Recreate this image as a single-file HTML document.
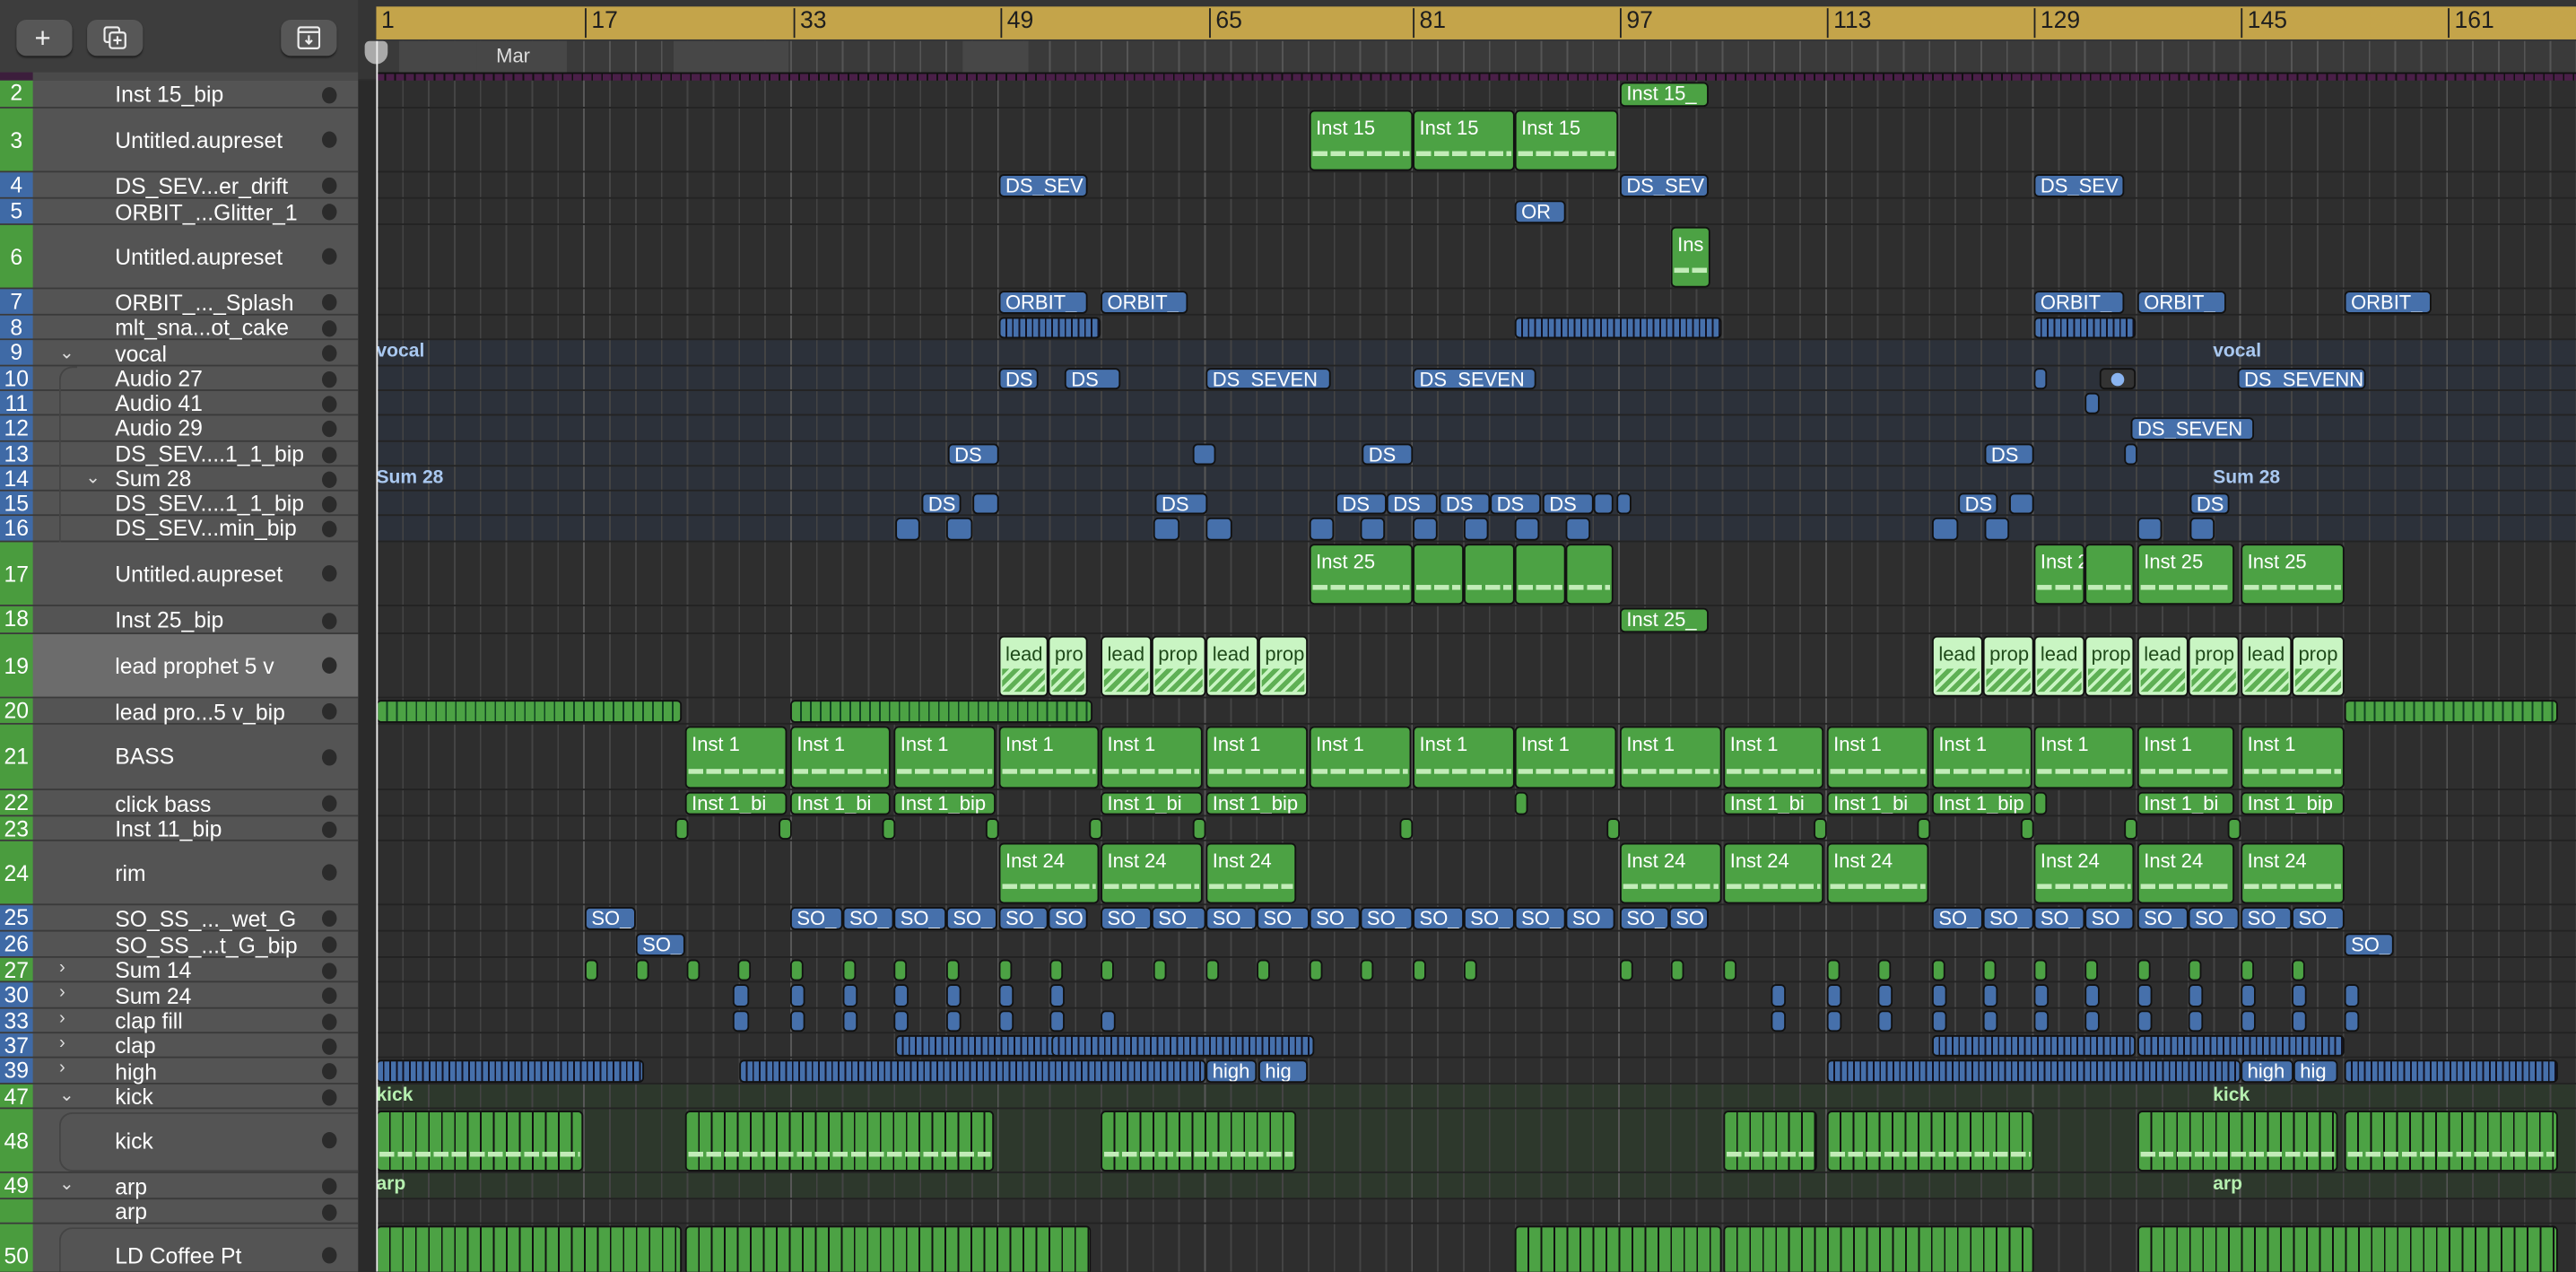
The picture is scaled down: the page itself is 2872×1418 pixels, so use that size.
<!DOCTYPE html>
<html><head><meta charset="utf-8"><style>
html,body{margin:0;padding:0;background:#2d2d2d;overflow:hidden;width:2872px;height:1418px}
#w{position:absolute;left:0;top:0;width:1568px;height:774px;transform:scale(1.83163);transform-origin:0 0;font-family:"Liberation Sans",sans-serif;overflow:hidden;background:#2e2e2e}
.a{position:absolute}
.hl{position:absolute;left:229px;width:1339px;height:1px;background:#232323}
.r{position:absolute;border:1px solid #111;border-radius:3px;color:#fff;font-size:12px;padding:0 3px;overflow:hidden;white-space:nowrap;box-sizing:border-box;line-height:13px}
.g{background:#4ca244}.b{background:#4670ab}
.lg{background:#c9f5c3;color:#1f4a1a}
.gs{background:repeating-linear-gradient(90deg,#4ca244 0 5px,#142 5px 6px)}
.bs{background:repeating-linear-gradient(90deg,#4670ab 0 3px,#112 3px 4px)}
.t{padding-top:4px}
.t i{position:absolute;left:1px;right:1px;bottom:8px;height:3px;background:repeating-linear-gradient(90deg,#c2ecb8 0 9px,transparent 9px 11px)}
.lg i{position:absolute;left:1px;right:1px;bottom:2px;height:14px;background:repeating-linear-gradient(135deg,#5fb055 0 3px,#c9f5c3 3px 5px)}
.y2{top:50px;height:15px}.y3{top:67px;height:37px}.y4{top:106px;height:14px}.y5{top:122px;height:14px}.y6{top:138px;height:37px}.y7{top:177px;height:14px}.y8{top:193px;height:13px}.y10{top:224px;height:13px}.y11{top:239px;height:13px}.y12{top:254px;height:14px}.y13{top:270px;height:13px}.y15{top:300px;height:13px}.y16{top:315px;height:14px}.y17{top:331px;height:37px}.y18{top:370px;height:15px}.y19{top:387px;height:37px}.y20{top:426px;height:14px}.y21{top:442px;height:38px}.y22{top:482px;height:14px}.y23{top:498px;height:13px}.y24{top:513px;height:37px}.y25{top:552px;height:14px}.y26{top:568px;height:14px}.y27{top:584px;height:13px}.y30{top:599px;height:14px}.y33{top:615px;height:13px}.y37{top:630px;height:13px}.y39{top:645px;height:14px}.y48{top:676px;height:37px}.y50{top:746px;height:30px}
.h{position:absolute;left:0;width:218px;background:#545454;border-bottom:1.5px solid #3a3a3a;box-sizing:border-box;color:#fff;font-size:13.5px}
.h .n{position:absolute;left:0;top:0;bottom:0;width:20px;text-align:center;font-size:13.5px}
.h .ng{background:#4a9c3e}.h .nb{background:#3f6aa6}
.h .s{position:absolute;left:70px;white-space:nowrap}
.h .d{position:absolute;left:196px;width:9px;height:10px;border-radius:50%;background:#2b2b2b}
.h .c{position:absolute;left:36px;font-size:11px;color:#ddd}
.fl{position:absolute;color:#a9c8f0;font-size:11.5px;font-weight:bold}
.fg{color:#b6f0b0}
.btn{position:absolute;top:12px;width:34px;height:22px;background:#575757;border-radius:6px;box-shadow:0 1px 1px #222}
.rn{position:absolute;top:5px;font-size:14.5px;color:#1e1e1e;border-left:1px solid #222;padding-left:3px;height:18px;line-height:17px}
</style></head><body><div id="w">
<div class="a" style="left:0;top:0;width:220px;height:48px;background:#3d3d3d"></div>
<div class="btn" style="left:10px"><div class="a" style="left:11px;top:2px;color:#eee;font-size:17px">+</div></div>
<div class="btn" style="left:53px"><svg class="a" style="left:10px;top:4px" width="14" height="14" viewBox="0 0 14 14" fill="none" stroke="#eee" stroke-width="1.2"><rect x="0.6" y="0.6" width="9" height="9" rx="1.5"/><rect x="3.8" y="3.8" width="9.5" height="9.5" rx="1.5" fill="#575757"/><path d="M8.5 6v5M6 8.5h5"/></svg></div>
<div class="btn" style="left:171px"><svg class="a" style="left:10px;top:4px" width="14" height="14" viewBox="0 0 14 14" fill="none" stroke="#eee" stroke-width="1.2"><rect x="0.6" y="0.6" width="12.8" height="12.8" rx="1.5"/><path d="M0.6 3.5h12.8M7 5.5v5M5 8.5l2 2 2-2"/></svg></div>
<div class="a" style="left:0;top:44px;width:218px;height:5px;background:#4a4a4a"></div>
<div class="a" style="left:0;top:44px;width:20px;height:5px;background:#3c1e3c"></div>
<div class="a" style="left:218px;top:0;width:1350px;height:48px;background:#353535"></div>
<div class="a" style="left:229px;top:4px;width:1339px;height:20px;background:#c4a44a"></div>
<div class="rn" style="left:229px;border:none">1</div><div class="rn" style="left:356px">17</div><div class="rn" style="left:483px">33</div><div class="rn" style="left:609px">49</div><div class="rn" style="left:736px">65</div><div class="rn" style="left:860px">81</div><div class="rn" style="left:986px">97</div><div class="rn" style="left:1112px">113</div><div class="rn" style="left:1238px">129</div><div class="rn" style="left:1364px">145</div><div class="rn" style="left:1490px">161</div>
<div class="a" style="left:229px;top:25px;width:1339px;height:19px;background:repeating-linear-gradient(90deg,#555 0 1px,#3a3a3a 1px 15.75px)"></div>
<div class="a" style="left:243px;top:25px;width:55px;height:19px;background:#474747"></div>
<div class="a" style="left:290px;top:25px;width:55px;height:19px;background:#474747;color:#ddd;font-size:12px;line-height:19px;padding-left:12px;box-sizing:border-box">Mar</div>
<div class="a" style="left:410px;top:25px;width:70px;height:19px;background:#474747"></div>
<div class="a" style="left:586px;top:25px;width:40px;height:19px;background:#474747"></div>
<div class="a" style="left:229px;top:44px;width:1339px;height:5px;background:repeating-linear-gradient(90deg,#4a1f48 0 5px,#111 5px 6px);border-top:1px solid #111;box-sizing:border-box"></div>
<div class="a" style="left:222px;top:25px;width:14px;height:14px;background:#aaa;border-radius:3px 3px 7px 7px"></div>
<div class="a" style="left:218px;top:49px;width:11px;height:725px;background:#2a2a2a"></div>
<div class="a" style="left:229px;top:207px;width:1339px;height:123px;background:#2c313a"></div>
<div class="a" style="left:229px;top:660px;width:1339px;height:70px;background:#2d382c"></div>
<div class="a" style="left:229px;top:49px;width:1339px;height:725px;background:repeating-linear-gradient(90deg,#444 0 1px,transparent 1px 15.75px)"></div>
<div class="a" style="left:229px;top:49px;width:1339px;height:725px;background:repeating-linear-gradient(90deg,#575757 0 1px,transparent 1px 126px)"></div>
<div class="hl" style="top:65px"></div><div class="hl" style="top:104px"></div><div class="hl" style="top:120px"></div><div class="hl" style="top:136px"></div><div class="hl" style="top:175px"></div><div class="hl" style="top:191px"></div><div class="hl" style="top:206px"></div><div class="hl" style="top:222px"></div><div class="hl" style="top:237px"></div><div class="hl" style="top:252px"></div><div class="hl" style="top:268px"></div><div class="hl" style="top:283px"></div><div class="hl" style="top:298px"></div><div class="hl" style="top:313px"></div><div class="hl" style="top:329px"></div><div class="hl" style="top:368px"></div><div class="hl" style="top:385px"></div><div class="hl" style="top:424px"></div><div class="hl" style="top:440px"></div><div class="hl" style="top:480px"></div><div class="hl" style="top:496px"></div><div class="hl" style="top:511px"></div><div class="hl" style="top:550px"></div><div class="hl" style="top:566px"></div><div class="hl" style="top:582px"></div><div class="hl" style="top:597px"></div><div class="hl" style="top:613px"></div><div class="hl" style="top:628px"></div><div class="hl" style="top:643px"></div><div class="hl" style="top:659px"></div><div class="hl" style="top:674px"></div><div class="hl" style="top:713px"></div><div class="hl" style="top:729px"></div><div class="hl" style="top:744px"></div>
<div class="h" style="top:49px;height:17px"><div class="n ng">2</div><div class="s" style="top:1px">Inst 15_bip</div><div class="d" style="top:4px"></div></div>
<div class="h" style="top:66px;height:39px"><div class="n ng" style="line-height:39px">3</div><div class="s" style="top:12px">Untitled.aupreset</div><div class="d" style="top:14px"></div></div>
<div class="h" style="top:105px;height:16px"><div class="n nb">4</div><div class="s" style="top:1px">DS_SEV...er_drift</div><div class="d" style="top:3px"></div></div>
<div class="h" style="top:121px;height:16px"><div class="n nb">5</div><div class="s" style="top:1px">ORBIT_...Glitter_1</div><div class="d" style="top:3px"></div></div>
<div class="h" style="top:137px;height:39px"><div class="n ng" style="line-height:39px">6</div><div class="s" style="top:12px">Untitled.aupreset</div><div class="d" style="top:14px"></div></div>
<div class="h" style="top:176px;height:16px"><div class="n nb">7</div><div class="s" style="top:1px">ORBIT_..._Splash</div><div class="d" style="top:3px"></div></div>
<div class="h" style="top:192px;height:15px"><div class="n nb">8</div><div class="s" style="top:0">mlt_sna...ot_cake</div><div class="d" style="top:3px"></div></div>
<div class="h" style="top:207px;height:16px"><div class="n nb">9</div><div class="c" style="top:1px">&#8964;</div><div class="s" style="top:1px">vocal</div><div class="d" style="top:3px"></div></div>
<div class="h" style="top:223px;height:15px"><div class="n nb">10</div><div class="s" style="top:0">Audio 27</div><div class="d" style="top:3px"></div></div>
<div class="h" style="top:238px;height:15px"><div class="n nb">11</div><div class="s" style="top:0">Audio 41</div><div class="d" style="top:3px"></div></div>
<div class="h" style="top:253px;height:16px"><div class="n nb">12</div><div class="s" style="top:0">Audio 29</div><div class="d" style="top:3px"></div></div>
<div class="h" style="top:269px;height:15px"><div class="n nb">13</div><div class="s" style="top:0">DS_SEV....1_1_bip</div><div class="d" style="top:3px"></div></div>
<div class="h" style="top:284px;height:15px"><div class="n nb">14</div><div class="c" style="left:52px;top:0">&#8964;</div><div class="s" style="top:0">Sum 28</div><div class="d" style="top:3px"></div></div>
<div class="h" style="top:299px;height:15px"><div class="n nb">15</div><div class="s" style="top:0">DS_SEV....1_1_bip</div><div class="d" style="top:3px"></div></div>
<div class="h" style="top:314px;height:16px"><div class="n nb">16</div><div class="s" style="top:0">DS_SEV...min_bip</div><div class="d" style="top:3px"></div></div>
<div class="a" style="left:36px;top:223px;width:10px;height:107px;border-left:1px solid #444;border-top:1px solid #444;border-radius:8px 0 0 0"></div>
<div class="h" style="top:330px;height:39px"><div class="n ng" style="line-height:39px">17</div><div class="s" style="top:12px">Untitled.aupreset</div><div class="d" style="top:14px"></div></div>
<div class="h" style="top:369px;height:17px"><div class="n ng">18</div><div class="s" style="top:1px">Inst 25_bip</div><div class="d" style="top:4px"></div></div>
<div class="h" style="top:386px;height:39px;background:#6c6c6c"><div class="n ng" style="line-height:39px">19</div><div class="s" style="top:12px">lead prophet 5 v</div><div class="d" style="top:14px"></div></div>
<div class="h" style="top:425px;height:16px"><div class="n ng">20</div><div class="s" style="top:1px">lead pro...5 v_bip</div><div class="d" style="top:3px"></div></div>
<div class="h" style="top:441px;height:40px"><div class="n ng" style="line-height:40px">21</div><div class="s" style="top:12px">BASS</div><div class="d" style="top:15px"></div></div>
<div class="h" style="top:481px;height:16px"><div class="n ng">22</div><div class="s" style="top:1px">click bass</div><div class="d" style="top:3px"></div></div>
<div class="h" style="top:497px;height:15px"><div class="n ng">23</div><div class="s" style="top:0">Inst 11_bip</div><div class="d" style="top:3px"></div></div>
<div class="h" style="top:512px;height:39px"><div class="n ng" style="line-height:39px">24</div><div class="s" style="top:12px">rim</div><div class="d" style="top:14px"></div></div>
<div class="h" style="top:551px;height:16px"><div class="n nb">25</div><div class="s" style="top:1px">SO_SS_..._wet_G</div><div class="d" style="top:3px"></div></div>
<div class="h" style="top:567px;height:16px"><div class="n nb">26</div><div class="s" style="top:1px">SO_SS_...t_G_bip</div><div class="d" style="top:3px"></div></div>
<div class="h" style="top:583px;height:15px"><div class="n ng">27</div><div class="c" style="top:0">&#8250;</div><div class="s" style="top:0">Sum 14</div><div class="d" style="top:3px"></div></div>
<div class="h" style="top:598px;height:16px"><div class="n nb">30</div><div class="c" style="top:0">&#8250;</div><div class="s" style="top:1px">Sum 24</div><div class="d" style="top:3px"></div></div>
<div class="h" style="top:614px;height:15px"><div class="n nb">33</div><div class="c" style="top:0">&#8250;</div><div class="s" style="top:0">clap fill</div><div class="d" style="top:3px"></div></div>
<div class="h" style="top:629px;height:15px"><div class="n nb">37</div><div class="c" style="top:0">&#8250;</div><div class="s" style="top:0">clap</div><div class="d" style="top:3px"></div></div>
<div class="h" style="top:644px;height:16px"><div class="n nb">39</div><div class="c" style="top:0">&#8250;</div><div class="s" style="top:1px">high</div><div class="d" style="top:3px"></div></div>
<div class="h" style="top:660px;height:15px"><div class="n ng">47</div><div class="c" style="top:0">&#8964;</div><div class="s" style="top:0">kick</div><div class="d" style="top:3px"></div></div>
<div class="h" style="top:675px;height:39px"><div class="n ng" style="line-height:39px">48</div><div class="s" style="top:12px">kick</div><div class="d" style="top:14px"></div></div>
<div class="h" style="top:714px;height:16px"><div class="n ng">49</div><div class="c" style="top:0">&#8964;</div><div class="s" style="top:1px">arp</div><div class="d" style="top:3px"></div></div>
<div class="h" style="top:730px;height:15px"><div class="n ng"></div><div class="s" style="top:0">arp</div><div class="d" style="top:3px"></div></div>
<div class="h" style="top:745px;height:30px;border:none"><div class="n ng" style="line-height:40px">50</div><div class="s" style="top:12px">LD Coffee Pt</div><div class="d" style="top:14px"></div></div>
<div class="a" style="left:36px;top:677px;width:182px;height:36px;border:1px solid #444;border-right:none;border-radius:8px 0 0 8px;box-sizing:border-box"></div>
<div class="a" style="left:36px;top:747px;width:182px;height:30px;border:1px solid #444;border-right:none;border-radius:8px 0 0 0;box-sizing:border-box"></div>
<div class="fl" style="left:229px;top:208px">vocal</div><div class="fl" style="left:1347px;top:208px">vocal</div>
<div class="fl" style="left:229px;top:285px">Sum 28</div><div class="fl" style="left:1347px;top:285px">Sum 28</div>
<div class="fl fg" style="left:229px;top:661px">kick</div><div class="fl fg" style="left:1347px;top:661px">kick</div>
<div class="fl fg" style="left:229px;top:715px">arp</div><div class="fl fg" style="left:1347px;top:715px">arp</div>
<div class="r g y2" style="left:986px;width:54px">Inst 15_</div>
<div class="r g t y3" style="left:797px;width:63px">Inst 15<i></i></div><div class="r g t y3" style="left:860px;width:62px">Inst 15<i></i></div><div class="r g t y3" style="left:922px;width:63px">Inst 15<i></i></div>
<div class="r b y4" style="left:608px;width:54px">DS_SEV</div><div class="r b y4" style="left:986px;width:54px">DS_SEV</div><div class="r b y4" style="left:1238px;width:55px">DS_SEV</div>
<div class="r b y5" style="left:922px;width:31px">OR</div>
<div class="r g t y6" style="left:1017px;width:24px">Ins<i></i></div>
<div class="r b y7" style="left:608px;width:54px">ORBIT_</div><div class="r b y7" style="left:670px;width:53px">ORBIT_</div><div class="r b y7" style="left:1238px;width:55px">ORBIT_</div><div class="r b y7" style="left:1301px;width:54px">ORBIT_</div><div class="r b y7" style="left:1427px;width:53px">ORBIT_</div>
<div class="r bs y8" style="left:608px;width:62px"></div><div class="r bs y8" style="left:922px;width:126px"></div><div class="r bs y8" style="left:1238px;width:62px"></div>
<div class="r b y10" style="left:608px;width:24px">DS</div><div class="r b y10" style="left:648px;width:34px">DS_</div><div class="r b y10" style="left:734px;width:76px">DS_SEVEN</div><div class="r b y10" style="left:860px;width:75px">DS_SEVEN</div><div class="r b y10" style="left:1238px;width:8px"></div><div class="r y10" style="left:1278px;width:22px;background:#333"><div class="a" style="left:6px;top:2px;width:8px;height:8px;border-radius:50%;background:#8ab4f0"></div></div><div class="r b y10" style="left:1362px;width:78px">DS_SEVENN</div>
<div class="r b y11" style="left:1269px;width:9px"></div>
<div class="r b y12" style="left:1297px;width:75px">DS_SEVEN</div>
<div class="r b y13" style="left:577px;width:31px">DS_</div><div class="r b y13" style="left:726px;width:14px"></div><div class="r b y13" style="left:829px;width:31px">DS_</div><div class="r b y13" style="left:1208px;width:30px">DS_</div><div class="r b y13" style="left:1293px;width:8px"></div>
<div class="r b y15" style="left:561px;width:24px">DS</div><div class="r b y15" style="left:592px;width:16px"></div><div class="r b y15" style="left:703px;width:32px">DS_</div><div class="r b y15" style="left:813px;width:31px">DS_</div><div class="r b y15" style="left:844px;width:31px">DS_</div><div class="r b y15" style="left:876px;width:31px">DS_</div><div class="r b y15" style="left:907px;width:31px">DS_</div><div class="r b y15" style="left:939px;width:31px">DS_</div><div class="r b y15" style="left:970px;width:12px"></div><div class="r b y15" style="left:984px;width:9px"></div><div class="r b y15" style="left:1192px;width:24px">DS</div><div class="r b y15" style="left:1223px;width:15px"></div><div class="r b y15" style="left:1333px;width:24px">DS_</div>
<div class="r b y16" style="left:545px;width:15px"></div><div class="r b y16" style="left:576px;width:16px"></div><div class="r b y16" style="left:702px;width:16px"></div><div class="r b y16" style="left:734px;width:16px"></div><div class="r b y16" style="left:797px;width:15px"></div><div class="r b y16" style="left:828px;width:15px"></div><div class="r b y16" style="left:860px;width:15px"></div><div class="r b y16" style="left:891px;width:15px"></div><div class="r b y16" style="left:922px;width:15px"></div><div class="r b y16" style="left:953px;width:15px"></div><div class="r b y16" style="left:1176px;width:16px"></div><div class="r b y16" style="left:1208px;width:15px"></div><div class="r b y16" style="left:1301px;width:15px"></div><div class="r b y16" style="left:1333px;width:15px"></div>
<div class="r g t y17" style="left:797px;width:63px">Inst 25<i></i></div><div class="r g t y17" style="left:860px;width:31px"><i></i></div><div class="r g t y17" style="left:891px;width:31px"><i></i></div><div class="r g t y17" style="left:922px;width:31px"><i></i></div><div class="r g t y17" style="left:953px;width:29px"><i></i></div><div class="r g t y17" style="left:1238px;width:31px">Inst 25<i></i></div><div class="r g t y17" style="left:1269px;width:30px"><i></i></div><div class="r g t y17" style="left:1301px;width:59px">Inst 25<i></i></div><div class="r g t y17" style="left:1364px;width:63px">Inst 25<i></i></div>
<div class="r g y18" style="left:986px;width:54px">Inst 25_</div>
<div class="r lg t y19" style="left:608px;width:30px">lead<i></i></div><div class="r lg t y19" style="left:638px;width:24px">pro<i></i></div><div class="r lg t y19" style="left:670px;width:31px">lead<i></i></div><div class="r lg t y19" style="left:701px;width:33px">prop<i></i></div><div class="r lg t y19" style="left:734px;width:32px">lead<i></i></div><div class="r lg t y19" style="left:766px;width:30px">prop<i></i></div><div class="r lg t y19" style="left:1176px;width:31px">lead<i></i></div><div class="r lg t y19" style="left:1207px;width:31px">prop<i></i></div><div class="r lg t y19" style="left:1238px;width:31px">lead<i></i></div><div class="r lg t y19" style="left:1269px;width:30px">prop<i></i></div><div class="r lg t y19" style="left:1301px;width:31px">lead<i></i></div><div class="r lg t y19" style="left:1332px;width:31px">prop<i></i></div><div class="r lg t y19" style="left:1364px;width:31px">lead<i></i></div><div class="r lg t y19" style="left:1395px;width:32px">prop<i></i></div>
<div class="r gs y20" style="left:229px;width:186px"></div><div class="r gs y20" style="left:481px;width:184px"></div><div class="r gs y20" style="left:1427px;width:130px"></div>
<div class="r g t y21" style="left:417px;width:62px">Inst 1<i></i></div><div class="r g t y21" style="left:481px;width:61px">Inst 1<i></i></div><div class="r g t y21" style="left:544px;width:62px">Inst 1<i></i></div><div class="r g t y21" style="left:608px;width:61px">Inst 1<i></i></div><div class="r g t y21" style="left:670px;width:62px">Inst 1<i></i></div><div class="r g t y21" style="left:734px;width:62px">Inst 1<i></i></div><div class="r g t y21" style="left:797px;width:62px">Inst 1<i></i></div><div class="r g t y21" style="left:860px;width:62px">Inst 1<i></i></div><div class="r g t y21" style="left:922px;width:62px">Inst 1<i></i></div><div class="r g t y21" style="left:986px;width:62px">Inst 1<i></i></div><div class="r g t y21" style="left:1049px;width:61px">Inst 1<i></i></div><div class="r g t y21" style="left:1112px;width:62px">Inst 1<i></i></div><div class="r g t y21" style="left:1176px;width:61px">Inst 1<i></i></div><div class="r g t y21" style="left:1238px;width:61px">Inst 1<i></i></div><div class="r g t y21" style="left:1301px;width:59px">Inst 1<i></i></div><div class="r g t y21" style="left:1364px;width:63px">Inst 1<i></i></div>
<div class="r g y22" style="left:417px;width:62px">Inst 1_bi</div><div class="r g y22" style="left:481px;width:61px">Inst 1_bi</div><div class="r g y22" style="left:544px;width:62px">Inst 1_bip</div><div class="r g y22" style="left:670px;width:62px">Inst 1_bi</div><div class="r g y22" style="left:734px;width:62px">Inst 1_bip</div><div class="r g y22" style="left:922px;width:8px"></div><div class="r g y22" style="left:1049px;width:61px">Inst 1_bi</div><div class="r g y22" style="left:1112px;width:62px">Inst 1_bi</div><div class="r g y22" style="left:1176px;width:61px">Inst 1_bip</div><div class="r g y22" style="left:1238px;width:8px"></div><div class="r g y22" style="left:1301px;width:59px">Inst 1_bi</div><div class="r g y22" style="left:1364px;width:63px">Inst 1_bip</div>
<div class="r g y23" style="left:411px;width:7px"></div><div class="r g y23" style="left:474px;width:7px"></div><div class="r g y23" style="left:537px;width:7px"></div><div class="r g y23" style="left:600px;width:8px"></div><div class="r g y23" style="left:663px;width:7px"></div><div class="r g y23" style="left:726px;width:8px"></div><div class="r g y23" style="left:852px;width:8px"></div><div class="r g y23" style="left:978px;width:8px"></div><div class="r g y23" style="left:1104px;width:8px"></div><div class="r g y23" style="left:1167px;width:8px"></div><div class="r g y23" style="left:1230px;width:8px"></div><div class="r g y23" style="left:1293px;width:8px"></div><div class="r g y23" style="left:1356px;width:8px"></div>
<div class="r g t y24" style="left:608px;width:61px">Inst 24<i></i></div><div class="r g t y24" style="left:670px;width:62px">Inst 24<i></i></div><div class="r g t y24" style="left:734px;width:55px">Inst 24<i></i></div><div class="r g t y24" style="left:986px;width:62px">Inst 24<i></i></div><div class="r g t y24" style="left:1049px;width:61px">Inst 24<i></i></div><div class="r g t y24" style="left:1112px;width:62px">Inst 24<i></i></div><div class="r g t y24" style="left:1238px;width:61px">Inst 24<i></i></div><div class="r g t y24" style="left:1301px;width:59px">Inst 24<i></i></div><div class="r g t y24" style="left:1364px;width:63px">Inst 24<i></i></div>
<div class="r b y25" style="left:356px;width:31px">SO_</div><div class="r b y25" style="left:481px;width:32px">SO_</div><div class="r b y25" style="left:513px;width:31px">SO_</div><div class="r b y25" style="left:544px;width:32px">SO_</div><div class="r b y25" style="left:576px;width:31px">SO_</div><div class="r b y25" style="left:608px;width:30px">SO_</div><div class="r b y25" style="left:638px;width:24px">SO</div><div class="r b y25" style="left:670px;width:31px">SO_</div><div class="r b y25" style="left:701px;width:33px">SO_</div><div class="r b y25" style="left:734px;width:31px">SO_</div><div class="r b y25" style="left:765px;width:32px">SO_</div><div class="r b y25" style="left:797px;width:31px">SO_</div><div class="r b y25" style="left:828px;width:32px">SO_</div><div class="r b y25" style="left:860px;width:31px">SO_</div><div class="r b y25" style="left:891px;width:31px">SO_</div><div class="r b y25" style="left:922px;width:31px">SO_</div><div class="r b y25" style="left:953px;width:30px">SO</div><div class="r b y25" style="left:986px;width:30px">SO_</div><div class="r b y25" style="left:1016px;width:24px">SO</div><div class="r b y25" style="left:1176px;width:31px">SO_</div><div class="r b y25" style="left:1207px;width:31px">SO_</div><div class="r b y25" style="left:1238px;width:31px">SO_</div><div class="r b y25" style="left:1269px;width:30px">SO</div><div class="r b y25" style="left:1301px;width:31px">SO_</div><div class="r b y25" style="left:1332px;width:31px">SO_</div><div class="r b y25" style="left:1364px;width:31px">SO_</div><div class="r b y25" style="left:1395px;width:32px">SO_</div>
<div class="r b y26" style="left:387px;width:30px">SO_</div><div class="r b y26" style="left:1427px;width:30px">SO_</div>
<div class="r g y27" style="left:356px;width:8px"></div><div class="r g y27" style="left:387px;width:8px"></div><div class="r g y27" style="left:418px;width:8px"></div><div class="r g y27" style="left:449px;width:8px"></div><div class="r g y27" style="left:481px;width:8px"></div><div class="r g y27" style="left:513px;width:8px"></div><div class="r g y27" style="left:544px;width:8px"></div><div class="r g y27" style="left:576px;width:8px"></div><div class="r g y27" style="left:608px;width:8px"></div><div class="r g y27" style="left:639px;width:8px"></div><div class="r g y27" style="left:670px;width:8px"></div><div class="r g y27" style="left:702px;width:8px"></div><div class="r g y27" style="left:734px;width:8px"></div><div class="r g y27" style="left:765px;width:8px"></div><div class="r g y27" style="left:797px;width:8px"></div><div class="r g y27" style="left:828px;width:8px"></div><div class="r g y27" style="left:860px;width:8px"></div><div class="r g y27" style="left:891px;width:8px"></div><div class="r g y27" style="left:986px;width:8px"></div><div class="r g y27" style="left:1017px;width:8px"></div><div class="r g y27" style="left:1049px;width:8px"></div><div class="r g y27" style="left:1112px;width:8px"></div><div class="r g y27" style="left:1143px;width:8px"></div><div class="r g y27" style="left:1176px;width:8px"></div><div class="r g y27" style="left:1207px;width:8px"></div><div class="r g y27" style="left:1238px;width:8px"></div><div class="r g y27" style="left:1269px;width:8px"></div><div class="r g y27" style="left:1301px;width:8px"></div><div class="r g y27" style="left:1332px;width:8px"></div><div class="r g y27" style="left:1364px;width:8px"></div><div class="r g y27" style="left:1395px;width:8px"></div>
<div class="r b y30" style="left:446px;width:10px"></div><div class="r b y30" style="left:481px;width:9px"></div><div class="r b y30" style="left:513px;width:9px"></div><div class="r b y30" style="left:544px;width:9px"></div><div class="r b y30" style="left:576px;width:9px"></div><div class="r b y30" style="left:608px;width:9px"></div><div class="r b y30" style="left:639px;width:9px"></div><div class="r b y30" style="left:1078px;width:9px"></div><div class="r b y30" style="left:1112px;width:9px"></div><div class="r b y30" style="left:1143px;width:9px"></div><div class="r b y30" style="left:1176px;width:9px"></div><div class="r b y30" style="left:1207px;width:9px"></div><div class="r b y30" style="left:1238px;width:9px"></div><div class="r b y30" style="left:1269px;width:9px"></div><div class="r b y30" style="left:1301px;width:9px"></div><div class="r b y30" style="left:1332px;width:9px"></div><div class="r b y30" style="left:1364px;width:9px"></div><div class="r b y30" style="left:1395px;width:9px"></div><div class="r b y30" style="left:1427px;width:9px"></div>
<div class="r b y33" style="left:446px;width:10px"></div><div class="r b y33" style="left:481px;width:9px"></div><div class="r b y33" style="left:513px;width:9px"></div><div class="r b y33" style="left:544px;width:9px"></div><div class="r b y33" style="left:576px;width:9px"></div><div class="r b y33" style="left:608px;width:9px"></div><div class="r b y33" style="left:639px;width:9px"></div><div class="r b y33" style="left:670px;width:9px"></div><div class="r b y33" style="left:1078px;width:9px"></div><div class="r b y33" style="left:1112px;width:9px"></div><div class="r b y33" style="left:1143px;width:9px"></div><div class="r b y33" style="left:1176px;width:9px"></div><div class="r b y33" style="left:1207px;width:9px"></div><div class="r b y33" style="left:1238px;width:9px"></div><div class="r b y33" style="left:1269px;width:9px"></div><div class="r b y33" style="left:1301px;width:9px"></div><div class="r b y33" style="left:1332px;width:9px"></div><div class="r b y33" style="left:1364px;width:9px"></div><div class="r b y33" style="left:1395px;width:9px"></div><div class="r b y33" style="left:1427px;width:9px"></div>
<div class="r bs y37" style="left:545px;width:117px"></div><div class="r bs y37" style="left:640px;width:160px"></div><div class="r bs y37" style="left:1176px;width:124px"></div><div class="r bs y37" style="left:1301px;width:126px"></div>
<div class="r bs y39" style="left:229px;width:163px"></div><div class="r bs y39" style="left:450px;width:284px"></div><div class="r b y39" style="left:734px;width:31px">high</div><div class="r b y39" style="left:766px;width:30px">hig</div><div class="r bs y39" style="left:1112px;width:252px"></div><div class="r b y39" style="left:1364px;width:32px">high</div><div class="r b y39" style="left:1396px;width:27px">hig</div><div class="r bs y39" style="left:1427px;width:130px"></div>
<div class="r gs t y48" style="left:229px;width:126px;background:repeating-linear-gradient(90deg,#4ca244 0 6.9px,#111 6.9px 7.9px)"><i></i></div><div class="r gs t y48" style="left:417px;width:188px;background:repeating-linear-gradient(90deg,#4ca244 0 6.9px,#111 6.9px 7.9px)"><i></i></div><div class="r gs t y48" style="left:670px;width:119px;background:repeating-linear-gradient(90deg,#4ca244 0 6.9px,#111 6.9px 7.9px)"><i></i></div><div class="r gs t y48" style="left:1049px;width:57px;background:repeating-linear-gradient(90deg,#4ca244 0 6.9px,#111 6.9px 7.9px)"><i></i></div><div class="r gs t y48" style="left:1112px;width:126px;background:repeating-linear-gradient(90deg,#4ca244 0 6.9px,#111 6.9px 7.9px)"><i></i></div><div class="r gs t y48" style="left:1301px;width:122px;background:repeating-linear-gradient(90deg,#4ca244 0 6.9px,#111 6.9px 7.9px)"><i></i></div><div class="r gs t y48" style="left:1427px;width:130px;background:repeating-linear-gradient(90deg,#4ca244 0 6.9px,#111 6.9px 7.9px)"><i></i></div>
<div class="r y50" style="left:229px;width:186px;background:repeating-linear-gradient(90deg,#4ca244 0 6.9px,#111 6.9px 7.9px)"></div><div class="r y50" style="left:417px;width:247px;background:repeating-linear-gradient(90deg,#4ca244 0 6.9px,#111 6.9px 7.9px)"></div><div class="r y50" style="left:922px;width:126px;background:repeating-linear-gradient(90deg,#4ca244 0 6.9px,#111 6.9px 7.9px)"></div><div class="r y50" style="left:1049px;width:189px;background:repeating-linear-gradient(90deg,#4ca244 0 6.9px,#111 6.9px 7.9px)"></div><div class="r y50" style="left:1301px;width:256px;background:repeating-linear-gradient(90deg,#4ca244 0 6.9px,#111 6.9px 7.9px)"></div>
<div class="a" style="left:228.5px;top:25px;width:1px;height:749px;background:#eee"></div>
</div></body></html>
